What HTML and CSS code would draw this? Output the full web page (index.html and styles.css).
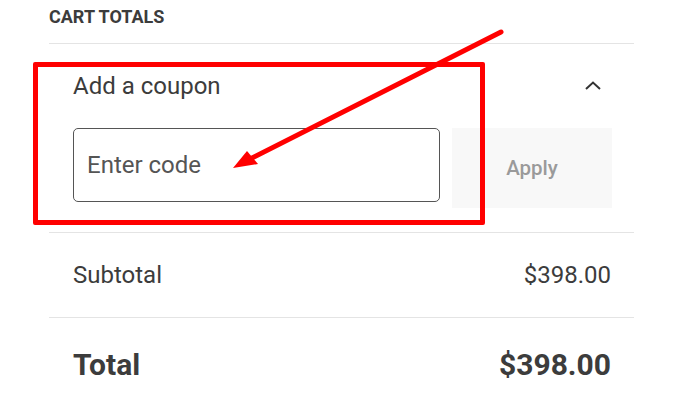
FILE: index.html
```html
<!DOCTYPE html>
<html lang="en">
<head>
  <meta charset="UTF-8">
  <title>Cart totals</title>
  <link rel="stylesheet" href="styles.css">
</head>
<body>

<div class="cart-totals">
  <h2 class="totals-title">Cart totals</h2>

  <div class="coupon">
    <div class="coupon-head">
      <span>Add a coupon</span>
      <svg class="chevron" width="18" height="12" viewBox="0 0 18 12">
        <path d="M2 9 L9 2.5 L16 9" fill="none" stroke="#333" stroke-width="2"/>
      </svg>
    </div>
    <div class="coupon-form">
      <input type="text" class="coupon-input" placeholder="Enter code">
      <button class="apply-btn">Apply</button>
    </div>
  </div>

  <div class="totals-row">
    <span>Subtotal</span>
    <span>$398.00</span>
  </div>

  <div class="totals-row grand">
    <span>Total</span>
    <span>$398.00</span>
  </div>
</div>

<!-- annotation drawn on top of the screenshot -->
<div class="mark-box"></div>
<svg class="mark-arrow" width="685" height="418" viewBox="0 0 685 418">
  <line x1="501" y1="32" x2="248" y2="160" stroke="#f00" stroke-width="5" stroke-linecap="round"/>
  <polygon points="233,168 247,151 258,164" fill="#f00"/>
</svg>

</body>
</html>
```

FILE: styles.css
```css
body {
  margin: 0;
  background: #fff;
  font-family: Roboto, "Liberation Sans", sans-serif;
  color: #3a3a3a;
  position: relative;
  height: 418px;
  overflow: hidden;
}
.cart-totals {
  margin-left: 49px;
  width: 585px;
}
.totals-title {
  margin: 0;
  padding-top: 5px;
  height: 38px;
  font-size: 18px;
  line-height: 24px;
  font-weight: 700;
  text-transform: uppercase;
  color: #3c3c3c;
  border-bottom: 1px solid #e4e4e4;
}
.coupon {
  padding: 28px 22px 24px 24px;
  border-bottom: 1px solid #e4e4e4;
}
.coupon-head {
  display: flex;
  justify-content: space-between;
  align-items: center;
  font-size: 24px;
  line-height: 28px;
  color: #3c3c3c;
}
.chevron {
  margin-right: 10px;
}
.coupon-form {
  display: flex;
  gap: 12px;
  margin-top: 28px;
  align-items: flex-start;
}
.coupon-input {
  flex: 1;
  height: 74px;
  box-sizing: border-box;
  border: 1px solid #555;
  border-radius: 5px;
  padding: 0 13px;
  font-family: inherit;
  font-size: 24px;
  color: #333;
}
.coupon-input::placeholder {
  color: #555;
}
.apply-btn {
  width: 160px;
  height: 80px;
  border: none;
  background: #f8f8f8;
  color: #9a9a9a;
  font-family: inherit;
  font-size: 20.5px;
  font-weight: 500;
}
.totals-row {
  display: flex;
  justify-content: space-between;
  padding: 28px 23px 28px 24px;
  font-size: 24px;
  line-height: 28px;
  color: #3c3c3c;
  border-bottom: 1px solid #e4e4e4;
}
.totals-row.grand {
  border-bottom: none;
  padding-top: 29px;
  font-size: 30px;
  line-height: 36px;
  font-weight: 700;
}
.mark-box {
  position: absolute;
  left: 33px;
  top: 62px;
  width: 442px;
  height: 153px;
  border: 5px solid #f00;
  border-radius: 2px;
}
.mark-arrow {
  position: absolute;
  left: 0;
  top: 0;
}
```
